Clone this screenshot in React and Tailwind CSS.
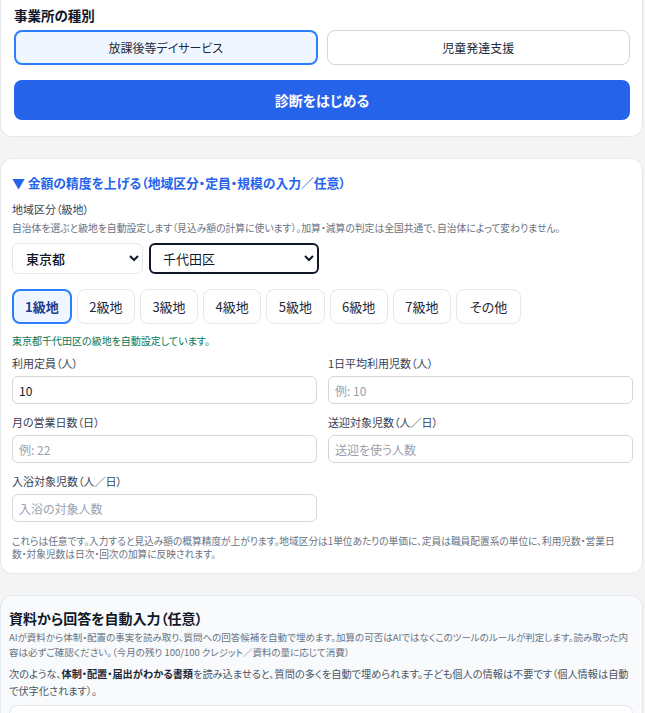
import React from "react";

const grades = ["1級地", "2級地", "3級地", "4級地", "5級地", "6級地", "7級地", "その他"];

function Field({ label, placeholder, value }) {
  return (
    <div className="flex flex-col">
      <div className="text-[11px] leading-4 text-gray-700">{label}</div>
      <input
        className="mt-[5px] h-[28px] w-full rounded-md border border-gray-300 bg-white pl-[6px] text-[12px] text-gray-900 placeholder:text-gray-400 outline-none"
        placeholder={placeholder}
        defaultValue={value}
      />
    </div>
  );
}

export default function App() {
  return (
    <div
      className="min-h-screen bg-[#f4f4f5] text-gray-900 [font-feature-settings:'palt']"
      style={{ fontFamily: '"Noto Sans CJK JP", "Noto Sans", sans-serif' }}
    >
      <div className="flex flex-col gap-[21px] pr-[2px]">
        {/* Card 1 */}
        <div className="rounded-b-xl border border-t-0 border-gray-200 bg-white pl-[13px] pr-[12px] pt-[5px] pb-[16px]">
          <div className="text-[13.5px] font-bold leading-5 text-gray-900">事業所の種別</div>
          <div className="mt-[5px] grid grid-cols-2 gap-[9px]">
            <button className="h-[35px] rounded-lg border-2 border-blue-500 bg-blue-50 text-[12px] text-gray-800">
              放課後等デイサービス
            </button>
            <button className="h-[35px] rounded-lg border border-gray-300 bg-white text-[12px] text-gray-800">
              児童発達支援
            </button>
          </div>
          <button className="mt-[15px] h-[40px] w-full rounded-lg bg-[#2563eb] text-[14px] font-bold text-white">
            診断をはじめる
          </button>
        </div>

        {/* Card 2 */}
        <div className="rounded-xl border border-gray-200 bg-white pl-[11px] pr-[9px] pt-[15px] pb-[12px]">
          <div className="text-[12.8px] font-bold leading-[18px] text-[#2563eb]">
            ▼ 金額の精度を上げる（地域区分・定員・規模の入力／任意）
          </div>
          <div className="mt-[9px] text-[11px] leading-4 text-gray-700">地域区分（級地）</div>
          <div className="mt-[4px] text-[9.8px] leading-[14px] text-gray-500">
            自治体を選ぶと級地を自動設定します（見込み額の計算に使います）。加算・減算の判定は全国共通で、自治体によって変わりません。
          </div>
          <div className="mt-[8px] flex gap-[6px]">
            <select
              className="h-[31px] w-[131px] rounded-md border border-gray-200 bg-white pl-[9px] pr-[4px] text-[13px] font-medium text-gray-900"
              defaultValue="東京都"
            >
              <option>東京都</option>
            </select>
            <select
              className="h-[31px] w-[170px] rounded-md border-2 border-gray-900 bg-white pl-[8px] pr-[3px] text-[13px] text-gray-900"
              defaultValue="千代田区"
            >
              <option>千代田区</option>
            </select>
          </div>
          <div className="mt-[15px] flex gap-[5px]">
            {grades.map((g, i) =>
              i === 0 ? (
                <button
                  key={g}
                  className="h-[35px] rounded-lg border-2 border-blue-500 bg-blue-50 px-[11px] text-[13px] font-bold text-[#1e3a8a]"
                >
                  {g}
                </button>
              ) : i === 7 ? (
                <button
                  key={g}
                  className="h-[35px] rounded-lg border border-gray-200 bg-white px-[13px] text-[13px] text-gray-800"
                >
                  {g}
                </button>
              ) : (
                <button
                  key={g}
                  className="h-[35px] rounded-lg border border-gray-200 bg-white px-[11.5px] text-[13px] text-gray-800"
                >
                  {g}
                </button>
              )
            )}
          </div>
          <div className="mt-[10px] text-[10px] leading-[14px] text-[#047857]">
            東京都千代田区の級地を自動設定しています。
          </div>
          <div className="mt-[7px] grid grid-cols-2 gap-x-[11px] gap-y-[10px]">
            <Field label="利用定員（人）" value="10" />
            <Field label="1日平均利用児数（人）" placeholder="例: 10" />
            <Field label="月の営業日数（日）" placeholder="例: 22" />
            <Field label="送迎対象児数（人／日）" placeholder="送迎を使う人数" />
            <Field label="入浴対象児数（人／日）" placeholder="入浴の対象人数" />
          </div>
          <div className="mt-[13px] mr-[8px] text-[9.7px] leading-[13px] text-gray-500">
            これらは任意です。入力すると見込み額の概算精度が上がります。地域区分は1単位あたりの単価に、定員は職員配置系の単位に、利用児数・営業日数・対象児数は日次・回次の加算に反映されます。
          </div>
        </div>

        {/* Card 3 */}
        <div className="rounded-t-xl border border-b-0 border-slate-200 bg-[#f8fafc] pl-[8px] pr-[9px] pt-[12px]">
          <div className="text-[14px] font-bold leading-5 text-gray-900">資料から回答を自動入力（任意）</div>
          <div className="mt-[2px] text-[9.5px] leading-[15px] text-gray-500">
            AIが資料から体制・配置の事実を読み取り、質問への回答候補を自動で埋めます。加算の可否はAIではなくこのツールのルールが判定します。読み取った内容は必ずご確認ください。（今月の残り 100/100 クレジット／資料の量に応じて消費）
          </div>
          <div className="mt-[5px] text-[10.2px] leading-[17px] text-gray-600">
            次のような、<span className="font-bold text-gray-800">体制・配置・届出がわかる書類</span>を読み込ませると、質問の多くを自動で埋められます。子ども個人の情報は不要です（個人情報は自動で伏字化されます）。
          </div>
          <div className="mt-[6px] h-[40px] rounded-t-lg border border-b-0 border-slate-200 bg-white"></div>
        </div>
      </div>
    </div>
  );
}
